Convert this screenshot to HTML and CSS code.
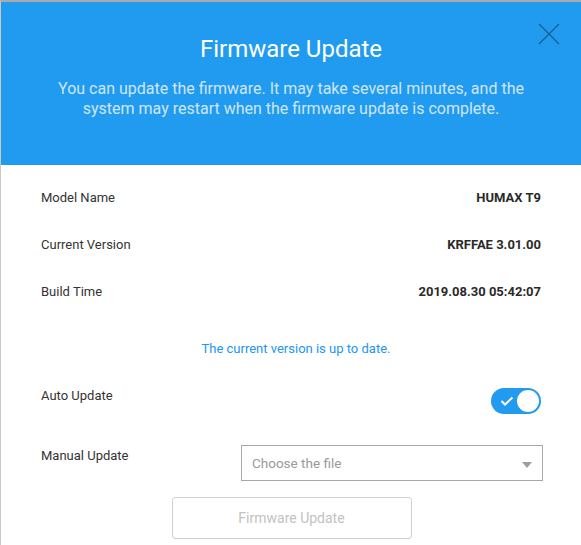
FILE: index.html
```html
<!DOCTYPE html>
<html>
<head>
<meta charset="utf-8">
<link rel="stylesheet" href="styles.css">
</head>
<body>
<div class="dialog">
  <header class="head">
    <button class="close" aria-label="Close">
      <svg width="22" height="22" viewBox="0 0 22 22"><path d="M1 1L21 21M21 1L1 21" stroke="#1b5a8c" stroke-width="1.2" fill="none"/></svg>
    </button>
    <h1 class="title">Firmware Update</h1>
    <p class="desc">You can update the firmware. It may take several minutes, and the system may restart when the firmware update is complete.</p>
  </header>
  <main class="content">
    <div class="row"><span class="label">Model Name</span><span class="value">HUMAX T9</span></div>
    <div class="row"><span class="label">Current Version</span><span class="value">KRFFAE 3.01.00</span></div>
    <div class="row"><span class="label">Build Time</span><span class="value">2019.08.30 05:42:07</span></div>
    <p class="status">The current version is up to date.</p>
    <div class="row auto">
      <span class="label">Auto Update</span>
      <span class="toggle">
        <svg class="check" width="14" height="10" viewBox="0 0 14 10"><path d="M1.5 5L5 8.5L12.5 1.5" stroke="#fff" stroke-width="2" fill="none"/></svg>
        <span class="knob"></span>
      </span>
    </div>
    <div class="row manual">
      <span class="label">Manual Update</span>
      <div class="select"><span>Choose the file</span><span class="arrow"></span></div>
    </div>
    <div class="actions"><button class="btn">Firmware Update</button></div>
  </main>
</div>
</body>
</html>
```
FILE: styles.css
```css
* { box-sizing: border-box; }
html, body { margin: 0; padding: 0; background: #fff; }
body { font-family: Roboto, "Noto Sans", sans-serif; color: #333; width: 581px; height: 545px; overflow: hidden; }
.dialog { border-top: 2px solid #aaa; border-left: 1px solid #c8c8c8; height: 545px; }
.head { position: relative; background: #219bef; height: 163px; padding-top: 32px; text-align: center; }
.close { position: absolute; right: 21px; top: 21px; width: 22px; height: 22px; padding: 0; border: 0; background: none; }
.close svg { display: block; }
.title { margin: 0; font-size: 24px; font-weight: 400; color: #fff; line-height: 30px; }
.desc { margin: 15px auto 0; width: 500px; font-size: 16px; line-height: 20px; color: #cfe6fc; }
.content { padding: 9px 40px 0 40px; }
.row { display: flex; justify-content: space-between; align-items: center; height: 47px; font-size: 13px; }
.label { color: #333; }
.value { font-weight: 700; color: #2a2a2a; }
.status { margin: 14px 0 0; padding-left: 10px; text-align: center; color: #2196f3; font-size: 13px; line-height: 40px; height: 40px; }
.auto { align-items: flex-start; height: auto; margin-top: 19px; }
.auto .label { line-height: 16px; }
.toggle { position: relative; width: 50px; height: 26px; border-radius: 13px; background: #219bef; margin-top: 0; }
.check { position: absolute; left: 9px; top: 8px; }
.knob { position: absolute; right: 2px; top: 2px; width: 22px; height: 22px; border-radius: 50%; background: #fff; }
.manual { align-items: flex-start; height: auto; margin-top: 32px; }
.manual .label { line-height: 16px; padding-top: 2px; }
.select { width: 302px; height: 36px; border: 1px solid #a8a8a8; display: flex; align-items: center; justify-content: space-between; padding: 0 10px; color: #9a9a9a; font-size: 13.5px; margin-top: -1px; margin-right: -2px; }
.arrow { width: 0; height: 0; border-left: 5px solid transparent; border-right: 5px solid transparent; border-top: 6px solid #9e9e9e; margin-top: 4px; }
.actions { display: flex; justify-content: center; margin-top: 16px; padding-left: 1px; }
.btn { width: 240px; height: 42px; border: 1.5px solid #cfcfcf; border-radius: 3px; background: #fff; color: #c2c2c2; font-family: Roboto, sans-serif; font-size: 14px; }
```
